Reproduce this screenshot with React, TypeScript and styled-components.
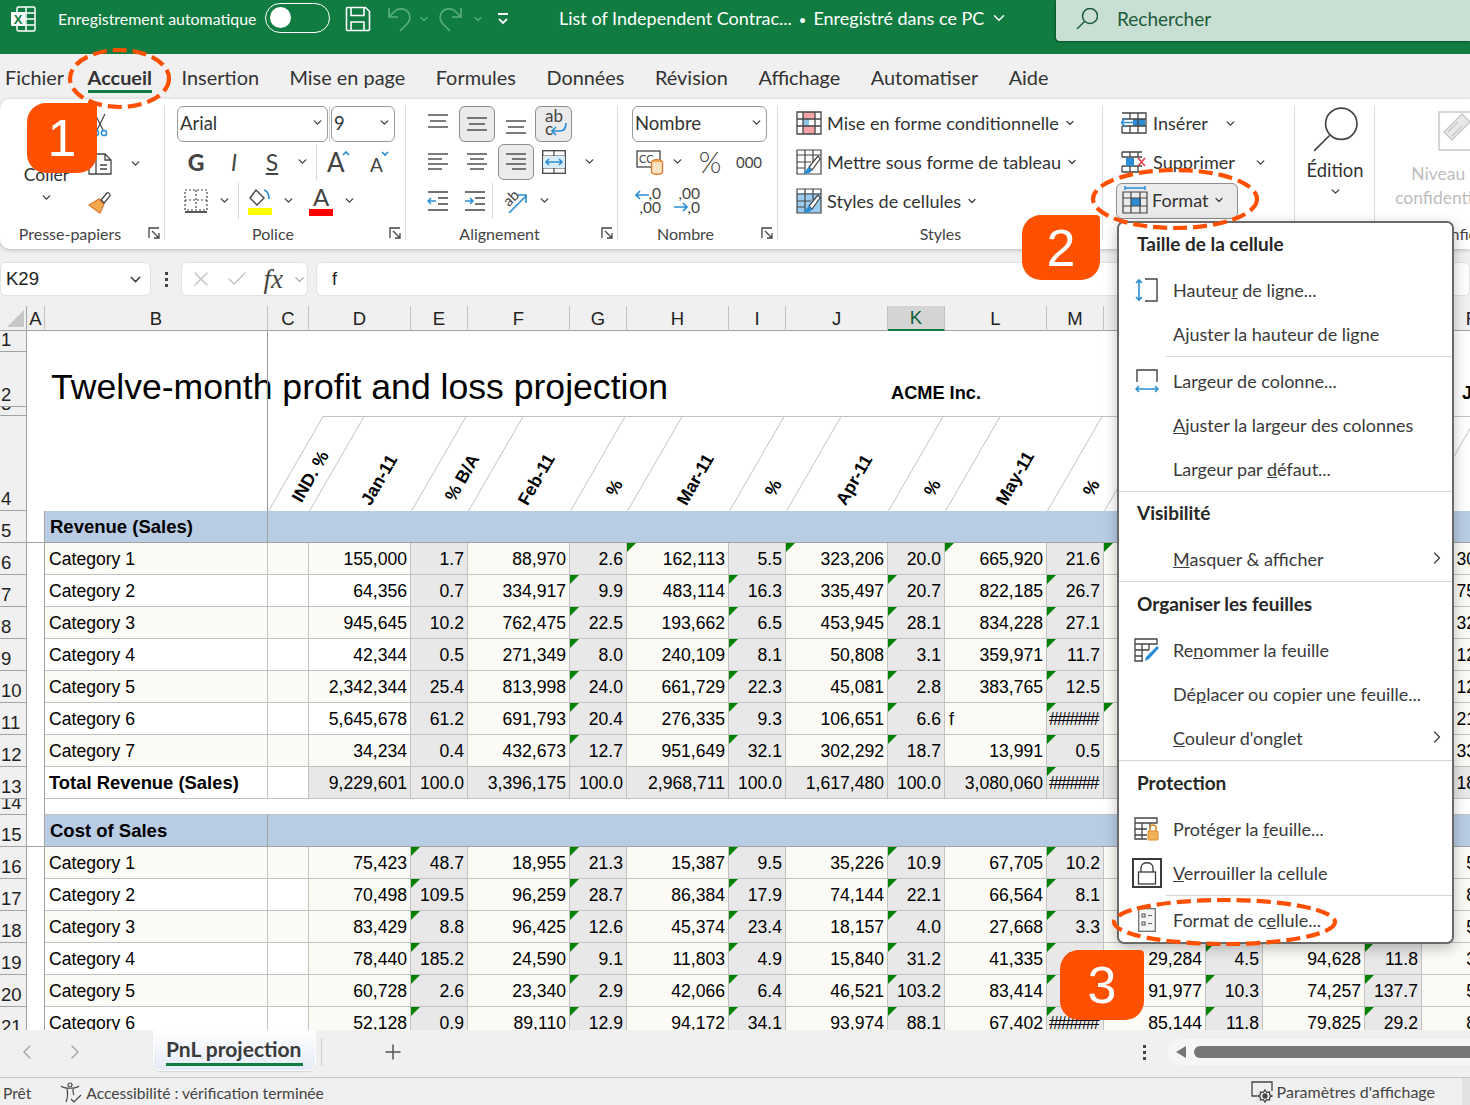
import React from 'react';
import styled, { createGlobalStyle, css } from 'styled-components';
import { Check, ChevronDown, ChevronLeft, ChevronRight, Plus, X } from 'lucide-react';

const UI_FONT = '"Lato", "Noto Sans", sans-serif';
const SHEET_FONT = '"Liberation Sans", Arial, sans-serif';
const GREEN = '#107c41';
const ORANGE = '#ff5000';
const GRID = '#c2c2c2';
const HEAD_LINE = '#a3a3a3';

const GlobalStyle = createGlobalStyle`
  html, body {
    margin: 0;
    background: #f0f0f0;
    overflow: hidden;
  }
  * { box-sizing: border-box; }
`;

const Page = styled.div`
  position: relative;
  width: 1470px;
  height: 1105px;
  overflow: hidden;
  display: flex;
  flex-direction: column;
  background: #f0f0f0;
  font-family: ${UI_FONT};
  color: #333;
`;

/* ---------- title bar ---------- */

const TitleBar = styled.header`
  height: 54px;
  flex: none;
  display: flex;
  align-items: flex-start;
  background: ${GREEN};
  color: #fff;
`;

const LogoSlot = styled.div`
  width: 58px;
  height: 38px;
  padding-left: 10px;
  display: flex;
  align-items: center;
`;

const AutoSave = styled.span`
  width: 207px;
  line-height: 37px;
  font-size: 15.9px;
  white-space: nowrap;
`;

const Toggle = styled.div`
  width: 65px;
  height: 30px;
  margin-top: 3px;
  border: 1.5px solid #fff;
  border-radius: 15px;
  padding: 3px 4px;
  &::before {
    content: '';
    display: block;
    width: 21px;
    height: 21px;
    border-radius: 50%;
    background: #fff;
  }
`;

const QuickSlot = styled.div<{ $w: number }>`
  width: ${p => p.$w}px;
  height: 38px;
  display: flex;
  align-items: center;
  justify-content: center;
  flex: none;
`;

const DocTitle = styled.div`
  margin-left: 43px;
  width: 497px;
  height: 38px;
  display: flex;
  align-items: center;
  gap: 6px;
  padding-bottom: 2px;
  font-size: 18px;
  white-space: pre;
`;

const DocDot = styled.span`
  margin: 0 7px;
  font-size: 13px;
`;

const SearchBox = styled.div`
  width: 414px;
  height: 41px;
  display: flex;
  align-items: center;
  gap: 19px;
  padding: 0 0 4px 20px;
  background: #c9dfd3;
  border-bottom-left-radius: 4px;
  box-shadow: -1px 1px 2px rgba(0, 0, 0, 0.35);
  color: #1d5a3a;
  font-size: 19px;
`;

/* ---------- tabs ---------- */

const TabStrip = styled.nav`
  height: 45px;
  flex: none;
  display: flex;
  gap: 30.5px;
  padding: 8px 0 0 5px;
  font-size: 19.9px;
`;

const TabItem = styled.span<{ $active?: boolean }>`
  position: relative;
  height: 30px;
  line-height: 30px;
  white-space: nowrap;
  ${p => p.$active && css`
    font-weight: 700;
    margin: 0 -1px 0 -7px;
    &::after {
      content: '';
      position: absolute;
      left: 0;
      right: 0;
      bottom: -1px;
      height: 3px;
      background: ${GREEN};
    }
  `}
`;

/* ---------- ribbon ---------- */

const Ribbon = styled.section`
  height: 150px;
  flex: none;
  display: flex;
  padding-top: 6px;
  background: #fff;
  border-radius: 10px 0 0 10px;
  box-shadow: 0 1px 4px rgba(0, 0, 0, 0.22);
`;

const Group = styled.div<{ $w: number }>`
  position: relative;
  width: ${p => p.$w}px;
  flex: none;
  display: flex;
  flex-direction: column;
  &::after {
    content: '';
    position: absolute;
    right: 0;
    top: 1px;
    width: 1px;
    height: 134px;
    background: #dcdcdc;
  }
`;

const GroupBody = styled.div<{ $pad?: number }>`
  height: 115px;
  padding-left: ${p => p.$pad ?? 0}px;
`;

const GroupFoot = styled.div`
  height: 26px;
  display: flex;
  align-items: center;
  font-size: 16px;
  color: #444;
`;

const GroupName = styled.span`
  flex: 1;
  text-align: center;
`;

const Launcher = styled.span`
  width: 25px;
  padding-left: 8px;
  display: flex;
`;

const ToolRow = styled.div<{ $h?: number }>`
  height: ${p => p.$h ?? 39}px;
  display: flex;
  align-items: center;
`;

const ToolBtn = styled.span<{ $w?: number; $on?: boolean }>`
  width: ${p => p.$w ?? 38}px;
  height: 36px;
  flex: none;
  display: flex;
  align-items: center;
  justify-content: center;
  color: #444;
  ${p => p.$on && css`
    background: #ebebeb;
    border: 1px solid #8d8d8d;
    border-radius: 6px;
  `}
`;

const Glyph = styled.span<{ $size?: number; $kind?: string }>`
  font-size: ${p => p.$size ?? 23}px;
  color: #444;
  ${p => p.$kind === 'bold' && 'font-weight: 900;'}
  ${p => p.$kind === 'italic' && 'font-style: italic;'}
  ${p => p.$kind === 'under' && 'text-decoration: underline;'}
  ${p => p.$kind === 'thin' && 'font-weight: 300;'}
`;

const VSep = styled.span<{ $w: number }>`
  width: ${p => p.$w}px;
  height: 36px;
  flex: none;
  display: flex;
  justify-content: center;
  &::before {
    content: '';
    width: 1px;
    background: #d6d6d6;
  }
`;

const SelectBox = styled.div<{ $w: number }>`
  width: ${p => p.$w}px;
  height: 36px;
  flex: none;
  display: flex;
  align-items: center;
  justify-content: space-between;
  padding: 0 3px 2px 2px;
  background: #fff;
  border: 1px solid #9c9c9c;
  border-radius: 6px;
  font-size: 18.5px;
  color: #333;
`;

const Carets = styled(ChevronDown)`
  flex: none;
  color: #444;
`;

const Caret = ({ size = 13 }: { size?: number }) => <Carets size={size} strokeWidth={2.6} />;

const ClipColumns = styled.div`
  display: flex;
`;

const PasteCol = styled.div`
  width: 88px;
  padding-left: 5px;
  display: flex;
  flex-direction: column;
  align-items: center;
  font-size: 17.5px;
  line-height: 24px;
`;

const PasteIcon = styled.div`
  height: 58px;
  padding-top: 6px;
`;

const PasteCaret = styled.span`
  display: flex;
  margin-top: 4px;
`;

const SmallCol = styled.div`
  display: flex;
  flex-direction: column;
`;

const SmallIcon = styled.span`
  width: 24px;
  display: flex;
  justify-content: center;
  margin-right: 17px;
`;

const StyleRow = styled.div`
  height: 39px;
  display: flex;
  align-items: center;
  gap: 5px;
  padding: 0 0 3px 18px;
  font-size: 18.1px;
  white-space: nowrap;
`;

const CellRow = styled.div<{ $w: number; $on?: boolean }>`
  width: ${p => p.$w}px;
  height: 39px;
  display: flex;
  align-items: center;
  gap: 6px;
  padding: 0 4px 3px 5px;
  font-size: 18.1px;
  ${p => p.$on && css`
    height: 36px;
    gap: 4px;
    padding-bottom: 2px;
    background: #ebebeb;
    border: 1px solid #8d8d8d;
    border-radius: 6px;
  `}
`;

const PushRight = styled.span<{ $r?: number }>`
  margin-left: auto;
  margin-right: ${p => p.$r ?? 0}px;
  display: flex;
`;

const EditCol = styled.div`
  display: flex;
  flex-direction: column;
  align-items: center;
  font-size: 18.4px;
  line-height: 24px;
  padding-top: 2px;
`;

const EditLabel = styled.span`
  margin: 5px 0 3px;
`;

const SecureCol = styled.div`
  display: flex;
  flex-direction: column;
  align-items: center;
  color: #bdbdbd;
  font-size: 17.5px;
  line-height: 24px;
  white-space: nowrap;
  padding-top: 3px;
`;

const SecureIcon = styled.span`
  display: flex;
  margin: 0 0 8px 10px;
`;

const SecureFoot = styled(GroupFoot)`
  padding-left: 56px;
  white-space: nowrap;
`;

/* ---------- formula bar ---------- */

const FormulaRow = styled.div`
  height: 47px;
  flex: none;
  display: flex;
  padding-top: 13px;
`;

const BarBox = styled.div<{ $w?: number }>`
  height: 34px;
  ${p => (p.$w ? `width: ${p.$w}px; flex: none;` : 'flex: 1;')}
  display: flex;
  align-items: center;
  background: #fff;
  border: 1px solid #e2e2e2;
  border-radius: 6px;
`;

const NameText = styled.span`
  flex: 1;
  padding-left: 5px;
  font: 18.5px ${SHEET_FONT};
  color: #222;
`;

const FxSlot = styled.span<{ $w: number }>`
  width: ${p => p.$w}px;
  display: flex;
  justify-content: center;
  color: #c4c4c4;
`;

const FxText = styled.span`
  font: italic 27px "Liberation Serif", serif;
  line-height: 30px;
  color: #444;
`;

const DotsSlot = styled.span<{ $w: number }>`
  width: ${p => p.$w}px;
  flex: none;
  display: flex;
  flex-direction: column;
  align-items: center;
  justify-content: center;
  gap: 3px;
  i {
    width: 3px;
    height: 3px;
    background: #444;
  }
`;

const FormulaValue = styled.span`
  padding-left: 15px;
  font: 18px ${SHEET_FONT};
  color: #222;
`;

/* ---------- sheet ---------- */

const SheetArea = styled.div`
  position: relative;
  height: 734px;
  flex: none;
  overflow: hidden;
  background: #f0f0f0;
`;

const SheetGrid = styled.div`
  display: grid;
  grid-template-columns: 27px 18px 223px 41px repeat(7, 102px 57px) 102px;
  grid-template-rows: 25px 21px 55px 9px 95px 32px repeat(8, 32px) 16px repeat(7, 32px);
  width: 1524px;
  margin-top: 10px;
  font: 17.6px ${SHEET_FONT};
  color: #000;
`;

const Corner = styled.div`
  background: #f0f0f0;
  border-right: 1px solid ${HEAD_LINE};
  border-bottom: 1px solid ${HEAD_LINE};
  &::before {
    content: '';
    display: block;
    margin: 4px 0 0 7px;
    width: 17px;
    height: 17px;
    background: #c6c6c6;
    clip-path: polygon(100% 0, 100% 100%, 0 100%);
  }
`;

const ColHead = styled.div<{ $active?: boolean }>`
  display: flex;
  align-items: flex-end;
  justify-content: center;
  overflow: hidden;
  line-height: 23px;
  font-size: 18.5px;
  color: #222;
  background: #f0f0f0;
  border-right: 1px solid ${GRID};
  border-bottom: 1px solid ${HEAD_LINE};
  ${p => p.$active && css`
    background: #d4d4d4;
    color: #0d5f35;
    border-bottom: 2px solid ${GREEN};
  `}
`;

const RowHead = styled.div`
  display: flex;
  align-items: flex-end;
  overflow: hidden;
  padding-left: 1px;
  line-height: 22px;
  font-size: 18.5px;
  color: #222;
  background: #f0f0f0;
  border-right: 1px solid ${HEAD_LINE};
  border-bottom: 1px solid ${HEAD_LINE};
`;

const Blank = styled.div<{ $from: number; $to?: number; $line?: boolean }>`
  grid-column: ${p => p.$from} / ${p => p.$to ?? -1};
  background: #fff;
  ${p => p.$line && `border-bottom: 1px solid ${GRID};`}
`;

const GutterCell = styled.div<{ $line?: boolean }>`
  background: #fff;
  border-right: 1px solid ${HEAD_LINE};
  ${p => p.$line && `border-bottom: 1px solid ${HEAD_LINE};`}
`;

const TitleCell = styled.div`
  grid-column: 2 / -1;
  display: grid;
  grid-template-columns: 864px 571px auto;
  align-items: end;
  background: #fff;
`;

const SheetTitle = styled.span`
  padding-left: 24px;
  font-size: 35.6px;
  line-height: 40px;
  white-space: nowrap;
`;

const CompanyName = styled.span`
  font-size: 18.2px;
  font-weight: 700;
  line-height: 28px;
  white-space: nowrap;
`;

const DiagCell = styled.div`
  position: relative;
  background: #fff;
  &::before {
    content: '';
    position: absolute;
    z-index: 1;
    inset: 0 -1px 0 0;
    border-left: 1px solid ${GRID};
    border-top: 1px solid ${GRID};
    transform: skewX(-30deg);
    transform-origin: left bottom;
  }
`;

const DiagLabel = styled.span<{ $x: number; $b: number }>`
  position: absolute;
  z-index: 2;
  left: ${p => p.$x}px;
  bottom: ${p => p.$b}px;
  transform: rotate(-60deg);
  transform-origin: left bottom;
  font-size: 17.6px;
  font-weight: 700;
  line-height: 18px;
  white-space: nowrap;
`;

const FreezeLine = styled.div`
  position: absolute;
  left: 267px;
  top: 35px;
  width: 1px;
  height: 180px;
  background: #9c9c9c;
  z-index: 3;
`;

const BandLabel = styled.div`
  display: flex;
  align-items: center;
  padding: 0 0 0 5px;
  font-size: 18.5px;
  font-weight: 700;
  background: #b8cce4;
  border-right: 1px solid ${HEAD_LINE};
  border-bottom: 1px solid ${HEAD_LINE};
`;

const BandFill = styled.div`
  grid-column: 4 / -1;
  background: #b8cce4;
  border-bottom: 1px solid ${HEAD_LINE};
`;

type Tone = 'cream' | 'white' | 'grey';

const toneColor: Record<Tone, string> = { cream: '#fbfaf5', white: '#fff', grey: '#e8e8e8' };

const Cell = styled.div<{ $tone: Tone; $flag?: boolean; $label?: boolean; $bold?: boolean; $hash?: boolean }>`
  position: relative;
  display: flex;
  align-items: center;
  justify-content: ${p => (p.$label ? 'flex-start' : 'flex-end')};
  padding: ${p => (p.$label ? '2px 0 0 4px' : '2px 3px 0 0')};
  overflow: hidden;
  white-space: nowrap;
  background: ${p => toneColor[p.$tone]};
  border-right: 1px solid ${GRID};
  border-bottom: 1px solid ${GRID};
  ${p => p.$bold && 'font-weight: 700; font-size: 18.4px; padding-top: 0;'}
  ${p => p.$hash && 'letter-spacing: -1.6px; padding-right: 5px;'}
  ${p => p.$flag && css`
    &::before {
      content: '';
      position: absolute;
      top: 0;
      left: 0;
      width: 9px;
      height: 9px;
      background: #008000;
      clip-path: polygon(0 0, 100% 0, 0 100%);
    }
  `}
`;

/* ---------- sheet tabs and status ---------- */

const SheetTabs = styled.div`
  height: 47px;
  flex: none;
  display: flex;
  align-items: flex-start;
  background: #f0f0f0;
`;

const TabNav = styled.div`
  width: 153px;
  height: 44px;
  flex: none;
  display: flex;
  align-items: center;
  gap: 24px;
  padding-left: 15px;
  color: #a8a8a8;
`;

const ActiveSheet = styled.div`
  width: 163px;
  height: 41px;
  flex: none;
  padding: 5px 12px 0;
  background: linear-gradient(#fff, #e4ebf6);
  border: 1px solid #fff;
  border-top: 0;
  border-radius: 0 0 8px 8px;
  box-shadow: 0 1px 1px rgba(0, 0, 0, 0.12);
  font-size: 21px;
  font-weight: 700;
  white-space: nowrap;
`;

const SheetName = styled.span`
  display: block;
  line-height: 28px;
  border-bottom: 3px solid ${GREEN};
  color: #3a3a3a;
`;

const AddSheet = styled.div`
  width: 142px;
  height: 44px;
  flex: none;
  display: flex;
  align-items: center;
  color: #555;
  &::before {
    content: '';
    width: 1px;
    height: 28px;
    margin: 0 59px 0 5px;
    background: #cfcfcf;
  }
`;

const TabDots = styled(DotsSlot)`
  height: 44px;
  margin-left: auto;
`;

const ScrollTrack = styled.div`
  width: 302px;
  height: 26px;
  flex: none;
  margin: 9px 0 0 14px;
  display: flex;
  align-items: center;
  gap: 8px;
  padding-left: 8px;
  background: #f6f6f6;
  border-radius: 13px 0 0 13px;
`;

const ScrollArrow = styled.span`
  width: 10px;
  height: 12px;
  background: #767676;
  clip-path: polygon(100% 0, 100% 100%, 0 50%);
`;

const ScrollThumb = styled.span`
  flex: 1;
  height: 12px;
  background: #767676;
  border-radius: 6px 0 0 6px;
`;

const StatusBar = styled.footer`
  height: 28px;
  flex: none;
  display: flex;
  align-items: center;
  padding-left: 3px;
  border-top: 1px solid #c6c6c6;
  font-size: 15.6px;
  color: #444;
`;

const StatusItem = styled.span<{ $gap?: number }>`
  display: flex;
  align-items: center;
  gap: 4px;
  padding-top: 3px;
  margin-left: ${p => p.$gap ?? 0}px;
  white-space: nowrap;
`;

const StatusRight = styled(StatusItem)`
  margin-left: auto;
  height: 100%;
  padding-top: 0;
  font-size: 16px;
  &::after {
    content: '';
    width: 8px;
    height: 100%;
    margin-left: 23px;
    background: #e2e2e2;
  }
`;

/* ---------- format menu ---------- */

const Menu = styled.div`
  position: absolute;
  left: 1117px;
  top: 221px;
  width: 337px;
  height: 723px;
  z-index: 5;
  background: #fff;
  border: 2px solid #6a6a6a;
  border-radius: 7px;
  box-shadow: 0 4px 14px rgba(0, 0, 0, 0.25);
`;

const MenuHeading = styled.div`
  height: 45px;
  line-height: 42px;
  padding-left: 18px;
  font-size: 19px;
  font-weight: 700;
  color: #262626;
`;

const MenuRow = styled.div`
  height: 44px;
  display: flex;
  align-items: center;
  font-size: 18px;
  color: #3a3a3a;
  white-space: nowrap;
`;

const MenuIcon = styled.span`
  width: 54px;
  flex: none;
  display: flex;
  justify-content: center;
  padding-left: 2px;
`;

const MenuArrow = styled(PushRight)`
  margin-right: 5px;
  padding-bottom: 3px;
  color: #444;
`;

const MenuSep = styled.div<{ $h: number; $inset?: boolean }>`
  height: ${p => p.$h}px;
  margin-left: ${p => (p.$inset ? 47 : 0)}px;
  border-top: 1px solid #d4d4d4;
`;

/* ---------- call-outs ---------- */

const Ring = styled.svg<{ $x: number; $y: number }>`
  position: absolute;
  left: ${p => p.$x}px;
  top: ${p => p.$y}px;
  z-index: 6;
  overflow: visible;
`;

const Badge = styled.div<{ $x: number; $y: number; $w: number; $h: number }>`
  position: absolute;
  left: ${p => p.$x}px;
  top: ${p => p.$y}px;
  width: ${p => p.$w}px;
  height: ${p => p.$h}px;
  z-index: 7;
  display: flex;
  align-items: center;
  justify-content: center;
  background: ${ORANGE};
  border-radius: 19px 4px 19px 19px;
  color: #fff;
  font: 52px ${SHEET_FONT};
`;

/* ---------- drawn icons ---------- */

const BLUE = '#2a8dd4';
const INK = '#444';

const Excel = () => (
  <svg width="26" height="26" viewBox="0 0 26 26" fill="none" stroke="#fff" strokeWidth="1.5">
    <rect x="7" y="1" width="18" height="24" rx="1.5" />
    <path d="M7 7h18M7 13h18M7 19h18M16 1v24" />
    <rect x="1" y="6" width="14" height="14" rx="1" fill="#fff" stroke="none" />
    <text x="8" y="18" textAnchor="middle" fontFamily="Liberation Sans" fontWeight="700" fontSize="13" fill={GREEN} stroke="none">X</text>
  </svg>
);

const Save = () => (
  <svg width="26" height="26" viewBox="0 0 26 26" fill="none" stroke="#fff" strokeWidth="1.6">
    <path d="M1.5 2.5a1 1 0 0 1 1-1h18l4 4v18a1 1 0 0 1-1 1h-21a1 1 0 0 1-1-1z" />
    <path d="M6 1.5v8h13v-8M6 24.5v-8.5h13v8.5" />
  </svg>
);

const Undo = ({ flip }: { flip?: boolean }) => (
  <svg width="24" height="26" viewBox="0 0 24 26" fill="none" stroke="#58ac7f" strokeWidth="1.7" style={flip ? { transform: 'scaleX(-1)' } : undefined}>
    <path d="M2 2v9h9M2 11l6-6c3-3 10-3 13 1s2 9-1 12l-7 7" />
  </svg>
);

const QatMore = () => (
  <svg width="14" height="14" viewBox="0 0 14 14" fill="none" stroke="#fff" strokeWidth="1.8">
    <path d="M2 2h10M3 7l4 4 4-4" />
  </svg>
);

const Magnifier = ({ size = 22, stroke = '#d7e8de', dark }: { size?: number; stroke?: string; dark?: boolean }) => (
  <svg width={size} height={size} viewBox="0 0 44 44" fill="none" stroke={dark ? '#1d5a3a' : stroke} strokeWidth={size > 30 ? 1.6 : 3}>
    <circle cx="28" cy="16" r="15" />
    <path d="M17 27L2 42" />
  </svg>
);

const Launch = () => (
  <svg width="12" height="12" viewBox="0 0 12 12" fill="none" stroke={INK} strokeWidth="1.3">
    <path d="M1 11V1h10M4 4l7 7M11 6v5H6" />
  </svg>
);

const Lines = ({ rows, w = 22, h = 22 }: { rows: number[][]; w?: number; h?: number }) => (
  <svg width={w} height={h} viewBox={`0 0 ${w} ${h}`} stroke={INK} strokeWidth="1.4">
    {rows.map(([x1, y, x2]) => <path key={`${x1}-${y}`} d={`M${x1} ${y}H${x2}`} />)}
  </svg>
);

const WrapText = () => (
  <svg width="28" height="30" viewBox="0 0 28 30" fill="none">
    <text x="5" y="13" fontFamily="Lato" fontSize="17" fill={INK}>ab</text>
    <text x="5" y="26" fontFamily="Lato" fontSize="17" fill={INK}>c</text>
    <path d="M26 14c0 6-3 8-6 8h-7M16 18l-4 4 4 4" stroke={BLUE} strokeWidth="1.7" />
  </svg>
);

const Merge = () => (
  <svg width="24" height="24" viewBox="0 0 24 24" fill="none">
    <rect x=".7" y=".7" width="22.6" height="22.6" stroke={INK} strokeWidth="1.3" />
    <path d="M1 6h22M1 18h22M12 1v5M12 18v5" stroke={INK} strokeWidth="1.2" />
    <rect x="1" y="6" width="22" height="12" fill="#d9ecfa" />
    <path d="M4 12h16M7 9l-3 3 3 3M17 9l3 3-3 3" stroke={BLUE} strokeWidth="1.5" />
  </svg>
);

const Indent = ({ dir }: { dir: 'in' | 'out' }) => (
  <svg width="22" height="22" viewBox="0 0 22 22" fill="none">
    <path d="M1 2h20M11 8h10M11 14h10M1 20h20" stroke={INK} strokeWidth="1.4" />
    <path d={dir === 'out' ? 'M9 11H1M4 8l-3 3 3 3' : 'M1 11h8M6 8l3 3-3 3'} stroke={BLUE} strokeWidth="1.5" />
  </svg>
);

const Orientation = () => (
  <svg width="26" height="26" viewBox="0 0 26 26" fill="none">
    <text x="3" y="16" fontFamily="Lato" fontSize="15" fill={INK} transform="rotate(-45 9 13)">ab</text>
    <path d="M7 25L24 8M16 7h8v8" stroke={BLUE} strokeWidth="1.6" />
  </svg>
);

const Scissors = () => (
  <svg width="16" height="24" viewBox="0 0 16 24" fill="none">
    <path d="M3 1l8 16M13 1L5 17" stroke={INK} strokeWidth="1.2" />
    <circle cx="4" cy="20" r="2.6" stroke={BLUE} strokeWidth="1.5" />
    <circle cx="12" cy="20" r="2.6" stroke={BLUE} strokeWidth="1.5" />
  </svg>
);

const CopyDoc = () => (
  <svg width="24" height="22" viewBox="0 0 24 22" fill="none" stroke={INK} strokeWidth="1.3">
    <path d="M8 1h9l6 6v14H8zM17 1v6h6M1 8v13h7M12 12h7M12 16h7" />
  </svg>
);

const Brush = () => (
  <svg width="24" height="24" viewBox="0 0 24 24" fill="none">
    <path d="M11 8l5 5-4 9-11-8z" fill="#f6a94c" stroke="#d9762b" strokeWidth="1.2" />
    <path d="M13 9l6-7c1-1 4 1 3 3l-6 7z" fill="#fff" stroke={INK} strokeWidth="1.3" />
  </svg>
);

const Clipboard = () => (
  <svg width="34" height="42" viewBox="0 0 34 42" fill="none" stroke={INK} strokeWidth="1.4">
    <rect x="2" y="6" width="30" height="34" rx="2" fill="#f4d9a8" />
    <rect x="10" y="2" width="14" height="8" fill="#fff" />
  </svg>
);

const Borders = () => (
  <svg width="24" height="24" viewBox="0 0 24 24" fill="none" stroke={INK} strokeWidth="1.2">
    <path d="M1 1h22v20H1zM12 1v20M1 11h22" strokeDasharray="2 2" />
    <path d="M1 23h22" strokeWidth="1.8" />
  </svg>
);

const FillColor = () => (
  <svg width="26" height="28" viewBox="0 0 26 28" fill="none">
    <path d="M9 3l8 8-7 7-7-7z" stroke={INK} strokeWidth="1.4" />
    <path d="M17 3c4 1 5 5 5 9" stroke={BLUE} strokeWidth="1.8" />
    <rect x="1" y="21" width="24" height="7" fill="#ffff00" />
  </svg>
);

const FontColor = () => (
  <svg width="26" height="30" viewBox="0 0 26 30" fill="none">
    <text x="13" y="20" textAnchor="middle" fontFamily="Lato" fontSize="24" fill={INK}>A</text>
    <rect x="1" y="23" width="24" height="7" fill="#ff0000" />
  </svg>
);

const GrowA = ({ up }: { up?: boolean }) => (
  <svg width="32" height="28" viewBox="0 0 32 28" fill="none">
    <text x={up ? 5 : 8} y="24" fontFamily="Lato" fontSize={up ? 26 : 19} fill={INK}>A</text>
    <path d={up ? 'M21 7l3-3 3 3' : 'M20 4l3 3 3-3'} stroke={BLUE} strokeWidth="1.7" />
  </svg>
);

const Accounting = () => (
  <svg width="28" height="26" viewBox="0 0 28 26" fill="none">
    <rect x="1" y="2" width="23" height="16" stroke={INK} strokeWidth="1.3" />
    <text x="3" y="14" fontFamily="Lato" fontSize="11" fill={INK}>CC</text>
    <ellipse cx="21" cy="13" rx="5.5" ry="2.5" fill="#f6a94c" stroke="#d9762b" />
    <path d="M15.5 13v10c0 3 11 3 11 0V13" fill="#fbe3c4" stroke="#d9762b" strokeWidth="1.3" />
  </svg>
);

const Decimals = ({ more }: { more?: boolean }) => (
  <svg width="28" height="28" viewBox="0 0 28 28" fill="none">
    <text x="27" y="12" textAnchor="end" fontFamily="Lato" fontSize="15.5" fill={INK}>{more ? ',00' : ',0'}</text>
    <text x="27" y="26" textAnchor="end" fontFamily="Lato" fontSize="15.5" fill={INK}>{more ? ',0' : ',00'}</text>
    <path d={more ? 'M1 20h13M10 16l4 4-4 4' : 'M15 8H2M6 4L2 8l4 4'} stroke={BLUE} strokeWidth="1.7" />
  </svg>
);

const CondFormat = () => (
  <svg width="26" height="24" viewBox="0 0 26 24" fill="none">
    <rect x="7" y="1" width="12" height="7" fill="#f4a4a8" />
    <rect x="7" y="15" width="12" height="8" fill="#f4a4a8" />
    <rect x="7" y="8" width="6" height="7" fill="#8dc3ea" />
    <path d="M1 1h24v22H1zM7 1v22M19 1v22M1 8h24M1 15h24" stroke={INK} strokeWidth="1.3" />
  </svg>
);

const TableBrush = ({ filled }: { filled?: boolean }) => (
  <svg width="26" height="26" viewBox="0 0 26 26" fill="none">
    {filled && <rect x="1" y="5" width="24" height="20" fill="#9ccdf0" />}
    <path d="M1 1h24v24H1zM1 6h24M9 1v24M17 1v12M1 13h14M1 19h8" stroke={INK} strokeWidth="1.2" />
    <path d="M22 7L13 18l3 3 8-11z" fill="#fff" stroke={INK} strokeWidth="1.2" />
    <path d="M13 18c-2 1-3 4-6 7 4 0 8-1 9-4z" fill={BLUE} />
  </svg>
);

const InsertCells = () => (
  <svg width="26" height="22" viewBox="0 0 26 22" fill="none">
    <rect x="12" y="7" width="12" height="7" fill={BLUE} />
    <path d="M1 1h24v20H1M1 14v7M9 14v7M17 1v20M9 1v6M1 7h24M1 14h24" stroke={INK} strokeWidth="1.3" />
    <path d="M13 10.5H1M5 6l-5 4.5L5 15" stroke={BLUE} strokeWidth="1.6" />
  </svg>
);

const DeleteCells = () => (
  <svg width="26" height="22" viewBox="0 0 26 22" fill="none">
    <path d="M1 1h20M1 21h20M1 1v5M1 15v6M9 1v5M9 15v6M17 1v5M17 15v6M1 6h20M1 15h20" stroke={INK} strokeWidth="1.3" />
    <rect x="5" y="7" width="8" height="8" fill={BLUE} />
    <path d="M17 7l7 8M24 7l-7 8" stroke="#e53a47" strokeWidth="1.6" />
  </svg>
);

const FormatCells = () => (
  <svg width="26" height="28" viewBox="0 0 26 28" fill="none">
    <path d="M3 2h20M3 0v4M23 0v4" stroke={BLUE} strokeWidth="1.4" />
    <rect x="9" y="12" width="10" height="8" fill={BLUE} />
    <path d="M1 6h24v21H1zM9 6v21M18 6v21M1 12h24M1 20h24" stroke={INK} strokeWidth="1.2" />
  </svg>
);

const Sensitivity = () => (
  <svg width="34" height="46" viewBox="0 0 34 46" fill="none" stroke="#c9c9c9" strokeWidth="1.5">
    <path d="M1 4h32v38H1z" />
    <path d="M6 24L24 6l8 8-18 18z" fill="#e8e8e8" />
    <path d="M10 24l10-10M14 28l10-10" />
  </svg>
);

const RowHeightIco = () => (
  <svg width="24" height="24" viewBox="0 0 24 24" fill="none">
    <path d="M10 1h12v22H10" stroke={INK} strokeWidth="1.4" />
    <path d="M4 2v20M1 5l3-3 3 3M1 19l3 3 3-3" stroke={BLUE} strokeWidth="1.6" />
  </svg>
);

const ColWidthIco = () => (
  <svg width="24" height="24" viewBox="0 0 24 24" fill="none">
    <path d="M2 13V1h20v12" stroke={INK} strokeWidth="1.4" />
    <path d="M1 20h22M4 17l-3 3 3 3M20 17l3 3-3 3" stroke={BLUE} strokeWidth="1.5" />
  </svg>
);

const RenameIco = () => (
  <svg width="26" height="24" viewBox="0 0 26 24" fill="none">
    <path d="M1 1h22v5H1zM1 6v17h8M1 12h14M1 18h8M8 6v17M15 6v6" stroke={INK} strokeWidth="1.3" />
    <path d="M23 8l2 2-10 11-4 2 1-4z" fill={BLUE} />
  </svg>
);

const ProtectIco = () => (
  <svg width="26" height="24" viewBox="0 0 26 24" fill="none">
    <path d="M1 1h22v5H1zM1 6v16h12M1 12h12M1 18h12M8 6v16M16 6v6" stroke={INK} strokeWidth="1.3" />
    <path d="M16 14v-3c0-4 6-4 6 0v3" stroke="#d98a25" strokeWidth="1.5" />
    <rect x="14" y="14" width="10" height="9" rx="1" fill="#f2b25c" stroke="#d98a25" />
  </svg>
);

const LockBox = () => (
  <svg width="30" height="30" viewBox="0 0 30 30" fill="none" stroke="#3a3a3a">
    <rect x="1" y="1" width="28" height="28" strokeWidth="2" />
    <path d="M9 14V10c0-7 12-7 12 0v4" strokeWidth="1.3" />
    <rect x="6.5" y="14" width="17" height="12" strokeWidth="1.3" />
  </svg>
);

const FormatDialog = () => (
  <svg width="18" height="24" viewBox="0 0 18 24" fill="none" stroke="#666" strokeWidth="1.2">
    <rect x=".7" y=".7" width="16.6" height="22.6" fill="#f5f5f5" />
    <rect x="4" y="6" width="3" height="3" />
    <rect x="4" y="14" width="3" height="3" />
    <path d="M10 7.5h4M10 15.5h4" />
  </svg>
);

const AccessIco = () => (
  <svg width="22" height="22" viewBox="0 0 22 22" fill="none" stroke={INK} strokeWidth="1.2">
    <circle cx="10" cy="3" r="2" />
    <path d="M1 4c3 3 15 3 18 0M7 7c1 4 1 8-1 13M13 7c0 3 0 5 1 6" />
    <path d="M11 17l3 3 7-7" />
  </svg>
);

const DisplayIco = () => (
  <svg width="22" height="22" viewBox="0 0 22 22" fill="none" stroke={INK} strokeWidth="1.3">
    <path d="M6 15H1V1h20v9" />
    <circle cx="14" cy="15" r="2" fill={INK} />
    <path d="M14 9l1.6 2.4 2.9-.4.2 2.9L21 15l-2.3 1.1-.2 2.9-2.9-.4L14 21l-1.6-2.4-2.9.4-.2-2.9L7 15l2.3-1.1.2-2.9 2.9.4z" />
  </svg>
);

const DashedEllipse = ({ x, y, w, h }: { x: number; y: number; w: number; h: number }) => (
  <Ring $x={x} $y={y} width={w} height={h} viewBox={`0 0 ${w} ${h}`} fill="none">
    <ellipse cx={w / 2} cy={h / 2} rx={w / 2 - 2} ry={h / 2 - 2} stroke={ORANGE} strokeWidth="4.2" strokeDasharray="14 6" />
  </Ring>
);

/* ---------- sheet data ---------- */

const LETTERS = 'ABCDEFGHIJKLMNOPQR'.split('');

const DIAGONALS: [string, number, number][] = [
  ['IND. %', 36, 6], ['Jan-11', 64, 3], ['% B/A', 46, 7], ['Feb-11', 62, 3], ['%', 48, 12], ['Mar-11', 62, 3],
  ['%', 48, 12], ['Apr-11', 62, 3], ['%', 48, 12], ['May-11', 63, 3], ['%', 48, 12], ['Jun-11', 62, 3],
  ['%', 48, 12], ['Jul-11', 62, 3], ['%', 48, 12], ['Aug-11', 62, 3],
];

const REVENUE: [string, string[], number[]][] = [
  ['Category 1', ['155,000', '1.7', '88,970', '2.6', '162,113', '5.5', '323,206', '20.0', '665,920', '21.6', '218,440', '5.1', '412,006', '9.4', '303,128'], [4, 6, 8, 10]],
  ['Category 2', ['64,356', '0.7', '334,917', '9.9', '483,114', '16.3', '335,497', '20.7', '822,185', '26.7', '402,118', '9.4', '120,553', '2.8', '751,902'], [3, 5, 7, 9]],
  ['Category 3', ['945,645', '10.2', '762,475', '22.5', '193,662', '6.5', '453,945', '28.1', '834,228', '27.1', '730,221', '17.1', '504,917', '11.7', '322,840'], [3, 5, 7, 9]],
  ['Category 4', ['42,344', '0.5', '271,349', '8.0', '240,109', '8.1', '50,808', '3.1', '359,971', '11.7', '118,302', '2.8', '633,150', '14.7', '125,773'], [3, 5, 7, 9]],
  ['Category 5', ['2,342,344', '25.4', '813,998', '24.0', '661,729', '22.3', '45,081', '2.8', '383,765', '12.5', '901,447', '21.1', '266,318', '6.2', '127,605'], [3, 5, 7, 9]],
  ['Category 6', ['5,645,678', '61.2', '691,793', '20.4', '276,335', '9.3', '106,651', '6.6', 'f', '######', '540,662', '12.6', '815,029', '18.9', '214,386'], [3, 5, 7, 9, 10]],
  ['Category 7', ['34,234', '0.4', '432,673', '12.7', '951,649', '32.1', '302,292', '18.7', '13,991', '0.5', '311,870', '7.3', '152,744', '3.5', '338,019'], [3, 5, 7, 9]],
];

const REV_TOTAL = ['9,229,601', '100.0', '3,396,175', '100.0', '2,968,711', '100.0', '1,617,480', '100.0', '3,080,060', '######', '4,280,300', '100.0', '4,310,600', '100.0', '182,400'];

const COSTS: [string, string[]][] = [
  ['Category 1', ['75,423', '48.7', '18,955', '21.3', '15,387', '9.5', '35,226', '10.9', '67,705', '10.2', '41,220', '6.3', '72,115', '9.6', '52,610']],
  ['Category 2', ['70,498', '109.5', '96,259', '28.7', '86,384', '17.9', '74,144', '22.1', '66,564', '8.1', '18,903', '7.1', '33,480', '4.2', '84,227']],
  ['Category 3', ['83,429', '8.8', '96,425', '12.6', '45,374', '23.4', '18,157', '4.0', '27,668', '3.3', '60,112', '9.9', '25,917', '5.1', '51,340']],
  ['Category 4', ['78,440', '185.2', '24,590', '9.1', '11,803', '4.9', '15,840', '31.2', '41,335', '10.1', '29,284', '4.5', '94,628', '11.8', '35,702']],
  ['Category 5', ['60,728', '2.6', '23,340', '2.9', '42,066', '6.4', '46,521', '103.2', '83,414', '5.6', '91,977', '10.3', '74,257', '137.7', '57,218']],
  ['Category 6', ['52,128', '0.9', '89,110', '12.9', '94,172', '34.1', '93,974', '88.1', '67,402', '######', '85,144', '11.8', '79,825', '29.2', '86,491']],
];

const isPct = (i: number) => i % 2 === 1;

const ValueCells = ({ values, flags, firstTone }: { values: string[]; flags: number[]; firstTone: Tone }) => (
  <>
    {values.map((v, i) => {
      const text = v === 'f';
      const tone: Tone = isPct(i) ? 'grey' : i === 0 ? firstTone : 'cream';
      return (
        <Cell key={i} $tone={tone} $flag={flags.includes(i)} $label={text} $hash={v === '######'}>
          {v}
        </Cell>
      );
    })}
  </>
);

const FLAG_ALL_COST = [1, 3, 5, 7, 9];
const FLAG_LOWER_COST = [1, 3, 5, 7, 9, 11, 13];

export default function App() {
  return (
    <Page>
      <GlobalStyle />

      <TitleBar>
        <LogoSlot><Excel /></LogoSlot>
        <AutoSave>Enregistrement automatique</AutoSave>
        <Toggle />
        <QuickSlot $w={56}><Save /></QuickSlot>
        <QuickSlot $w={26}><Undo /></QuickSlot>
        <QuickSlot $w={24}><ChevronDown size={12} color="#58ac7f" strokeWidth={2.5} /></QuickSlot>
        <QuickSlot $w={30}><Undo flip /></QuickSlot>
        <QuickSlot $w={24}><ChevronDown size={12} color="#58ac7f" strokeWidth={2.5} /></QuickSlot>
        <QuickSlot $w={26}><QatMore /></QuickSlot>
        <DocTitle>
          <span>List of Independent Contrac...<DocDot>•</DocDot>Enregistré dans ce PC</span>
          <ChevronDown size={18} strokeWidth={2} />
        </DocTitle>
        <SearchBox>
          <Magnifier dark />
          Rechercher
        </SearchBox>
      </TitleBar>

      <TabStrip>
        <TabItem>Fichier</TabItem>
        <TabItem $active>Accueil</TabItem>
        <TabItem>Insertion</TabItem>
        <TabItem>Mise en page</TabItem>
        <TabItem>Formules</TabItem>
        <TabItem>Données</TabItem>
        <TabItem>Révision</TabItem>
        <TabItem>Affichage</TabItem>
        <TabItem>Automatiser</TabItem>
        <TabItem>Aide</TabItem>
      </TabStrip>

      <Ribbon>
        <Group $w={165}>
          <GroupBody>
            <ClipColumns>
              <PasteCol>
                <PasteIcon><Clipboard /></PasteIcon>
                Coller
                <PasteCaret><Caret /></PasteCaret>
              </PasteCol>
              <SmallCol>
                <ToolRow><SmallIcon><Scissors /></SmallIcon></ToolRow>
                <ToolRow><SmallIcon><CopyDoc /></SmallIcon><Caret /></ToolRow>
                <ToolRow><SmallIcon><Brush /></SmallIcon></ToolRow>
              </SmallCol>
            </ClipColumns>
          </GroupBody>
          <GroupFoot><GroupName>Presse-papiers</GroupName><Launcher><Launch /></Launcher></GroupFoot>
        </Group>

        <Group $w={241}>
          <GroupBody $pad={12}>
            <ToolRow $h={37}>
              <SelectBox $w={151}>Arial<Caret /></SelectBox>
              <VSep $w={3} />
              <SelectBox $w={64}>9<Caret /></SelectBox>
            </ToolRow>
            <ToolRow>
              <ToolBtn><Glyph $kind="bold">G</Glyph></ToolBtn>
              <ToolBtn><Glyph $kind="italic">I</Glyph></ToolBtn>
              <ToolBtn><Glyph $kind="under">S</Glyph></ToolBtn>
              <ToolBtn $w={22}><Caret /></ToolBtn>
              <VSep $w={7} />
              <ToolBtn $w={36}><GrowA up /></ToolBtn>
              <ToolBtn $w={44}><GrowA /></ToolBtn>
            </ToolRow>
            <ToolRow>
              <ToolBtn><Borders /></ToolBtn>
              <ToolBtn $w={18}><Caret /></ToolBtn>
              <VSep $w={10} />
              <ToolBtn $w={34}><FillColor /></ToolBtn>
              <ToolBtn $w={22}><Caret /></ToolBtn>
              <ToolBtn $w={44}><FontColor /></ToolBtn>
              <ToolBtn $w={12}><Caret /></ToolBtn>
            </ToolRow>
          </GroupBody>
          <GroupFoot><GroupName>Police</GroupName><Launcher><Launch /></Launcher></GroupFoot>
        </Group>

        <Group $w={212}>
          <GroupBody $pad={12}>
            <ToolRow $h={37}>
              <ToolBtn $w={39}><Lines rows={[[1, 2, 21], [3, 8, 19], [1, 14, 21]]} /></ToolBtn>
              <ToolBtn $w={39}>
                <ToolBtn $w={36} $on><Lines rows={[[1, 5, 21], [3, 11, 19], [1, 17, 21]]} /></ToolBtn>
              </ToolBtn>
              <ToolBtn $w={39}><Lines rows={[[1, 8, 21], [3, 14, 19], [1, 20, 21]]} /></ToolBtn>
              <ToolBtn $w={37} $on><WrapText /></ToolBtn>
            </ToolRow>
            <ToolRow>
              <ToolBtn $w={39}><Lines rows={[[1, 3, 21], [1, 8, 15], [1, 13, 21], [1, 18, 15]]} /></ToolBtn>
              <ToolBtn $w={39}><Lines rows={[[1, 3, 21], [4, 8, 18], [1, 13, 21], [4, 18, 18]]} /></ToolBtn>
              <ToolBtn $w={39}>
                <ToolBtn $w={36} $on><Lines rows={[[1, 3, 21], [7, 8, 21], [1, 13, 21], [7, 18, 21]]} /></ToolBtn>
              </ToolBtn>
              <ToolBtn $w={37}><Merge /></ToolBtn>
              <ToolBtn $w={34}><Caret /></ToolBtn>
            </ToolRow>
            <ToolRow>
              <ToolBtn $w={39}><Indent dir="out" /></ToolBtn>
              <ToolBtn $w={35}><Indent dir="in" /></ToolBtn>
              <VSep $w={1} />
              <ToolBtn $w={44}><Orientation /></ToolBtn>
              <ToolBtn $w={14}><Caret /></ToolBtn>
            </ToolRow>
          </GroupBody>
          <GroupFoot><GroupName>Alignement</GroupName><Launcher><Launch /></Launcher></GroupFoot>
        </Group>

        <Group $w={160}>
          <GroupBody $pad={14}>
            <ToolRow $h={37}><SelectBox $w={135}>Nombre<Caret /></SelectBox></ToolRow>
            <ToolRow>
              <ToolBtn $w={36}><Accounting /></ToolBtn>
              <ToolBtn $w={18}><Caret /></ToolBtn>
              <ToolBtn $w={48}><Glyph $size={29} $kind="thin">%</Glyph></ToolBtn>
              <ToolBtn $w={30}><Glyph $size={15}>000</Glyph></ToolBtn>
            </ToolRow>
            <ToolRow>
              <ToolBtn $w={32}><Decimals /></ToolBtn>
              <ToolBtn $w={46}><Decimals more /></ToolBtn>
            </ToolRow>
          </GroupBody>
          <GroupFoot><GroupName>Nombre</GroupName><Launcher><Launch /></Launcher></GroupFoot>
        </Group>

        <Group $w={325}>
          <GroupBody>
            <StyleRow><CondFormat />Mise en forme conditionnelle<Caret size={12} /></StyleRow>
            <StyleRow><TableBrush />Mettre sous forme de tableau<Caret size={12} /></StyleRow>
            <StyleRow><TableBrush filled />Styles de cellules<Caret size={12} /></StyleRow>
          </GroupBody>
          <GroupFoot><GroupName>Styles</GroupName></GroupFoot>
        </Group>

        <Group $w={192}>
          <GroupBody $pad={13}>
            <CellRow $w={128}><InsertCells />Insérer<PushRight $r={3}><Caret /></PushRight></CellRow>
            <CellRow $w={158}><DeleteCells />Supprimer<PushRight $r={3}><Caret /></PushRight></CellRow>
            <CellRow $w={122} $on><FormatCells />Format<Caret size={12} /></CellRow>
          </GroupBody>
          <GroupFoot />
        </Group>

        <Group $w={80}>
          <GroupBody>
            <EditCol>
              <Magnifier size={46} stroke="#444" />
              <EditLabel>Édition</EditLabel>
              <Caret />
            </EditCol>
          </GroupBody>
        </Group>

        <Group $w={150}>
          <GroupBody>
            <SecureCol>
              <SecureIcon><Sensitivity /></SecureIcon>
              <span>Niveau de</span>
              <span>confidentialité</span>
            </SecureCol>
          </GroupBody>
          <SecureFoot><GroupName>Confidentialité</GroupName></SecureFoot>
        </Group>
      </Ribbon>

      <FormulaRow>
        <BarBox $w={151}>
          <NameText>K29</NameText>
          <Carets size={17} strokeWidth={2} style={{ marginRight: 6 }} />
        </BarBox>
        <DotsSlot $w={30}><i /><i /><i /></DotsSlot>
        <BarBox $w={127}>
          <FxSlot $w={38}><X size={24} strokeWidth={1.5} /></FxSlot>
          <FxSlot $w={36}><Check size={24} strokeWidth={1.5} /></FxSlot>
          <FxSlot $w={38}><FxText>fx</FxText></FxSlot>
          <Carets size={15} strokeWidth={2} color="#aaa" />
        </BarBox>
        <DotsSlot $w={8} />
        <BarBox><FormulaValue>f</FormulaValue></BarBox>
      </FormulaRow>

      <SheetArea>
        <SheetGrid>
          <Corner />
          {LETTERS.map(l => <ColHead key={l} $active={l === 'K'}>{l}</ColHead>)}

          <RowHead>1</RowHead>
          <Blank $from={2} />

          <RowHead>2</RowHead>
          <TitleCell>
            <SheetTitle>Twelve-month profit and loss projection</SheetTitle>
            <CompanyName>ACME Inc.</CompanyName>
            <CompanyName>J</CompanyName>
          </TitleCell>

          <RowHead>3</RowHead>
          <Blank $from={2} />

          <RowHead>4</RowHead>
          <Blank $from={2} $to={4} />
          {DIAGONALS.map(([t, x, b], i) => (
            <DiagCell key={i}><DiagLabel $x={x} $b={b}>{t}</DiagLabel></DiagCell>
          ))}

          <RowHead>5</RowHead>
          <GutterCell $line />
          <BandLabel>Revenue (Sales)</BandLabel>
          <BandFill />

          {REVENUE.map(([name, values, flags], i) => {
            const tone: Tone = i % 2 === 0 ? 'cream' : 'white';
            return (
              <React.Fragment key={name}>
                <RowHead>{i + 6}</RowHead>
                <GutterCell />
                <Cell $tone={tone} $label>{name}</Cell>
                <Cell $tone={tone} />
                <ValueCells values={values} flags={flags} firstTone={tone} />
              </React.Fragment>
            );
          })}

          <RowHead>13</RowHead>
          <GutterCell />
          <Cell $tone="white" $label $bold>Total Revenue (Sales)</Cell>
          <Cell $tone="white" />
          {REV_TOTAL.map((v, i) => (
            <Cell key={i} $tone="grey" $flag={i === 9} $hash={v === '######'}>{v}</Cell>
          ))}

          <RowHead>14</RowHead>
          <GutterCell />
          <Blank $from={3} $line />

          <RowHead>15</RowHead>
          <GutterCell $line />
          <BandLabel>Cost of Sales</BandLabel>
          <BandFill />

          {COSTS.map(([name, values], i) => {
            const tone: Tone = i % 2 === 0 ? 'cream' : 'white';
            return (
              <React.Fragment key={name}>
                <RowHead>{i + 16}</RowHead>
                <GutterCell />
                <Cell $tone={tone} $label>{name}</Cell>
                <Cell $tone={tone} />
                <ValueCells values={values} flags={i >= 3 ? FLAG_LOWER_COST : FLAG_ALL_COST} firstTone="cream" />
              </React.Fragment>
            );
          })}
        </SheetGrid>
        <FreezeLine />
      </SheetArea>

      <SheetTabs>
        <TabNav>
          <ChevronLeft size={24} strokeWidth={1.5} />
          <ChevronRight size={24} strokeWidth={1.5} />
        </TabNav>
        <ActiveSheet><SheetName>PnL projection</SheetName></ActiveSheet>
        <AddSheet><Plus size={24} strokeWidth={1.5} /></AddSheet>
        <TabDots $w={20}><i /><i /><i /></TabDots>
        <ScrollTrack><ScrollArrow /><ScrollThumb /></ScrollTrack>
      </SheetTabs>

      <StatusBar>
        <StatusItem>Prêt</StatusItem>
        <StatusItem $gap={29}><AccessIco />Accessibilité : vérification terminée</StatusItem>
        <StatusRight><DisplayIco />Paramètres d'affichage</StatusRight>
      </StatusBar>

      <Menu>
        <MenuHeading>Taille de la cellule</MenuHeading>
        <MenuRow><MenuIcon><RowHeightIco /></MenuIcon><span>Hauteu<u>r</u> de ligne...</span></MenuRow>
        <MenuRow><MenuIcon /><span>A<u>j</u>uster la hauteur de ligne</span></MenuRow>
        <MenuSep $h={3} $inset />
        <MenuRow><MenuIcon><ColWidthIco /></MenuIcon><span>Lar<u>g</u>eur de colonne...</span></MenuRow>
        <MenuRow><MenuIcon /><span><u>A</u>juster la largeur des colonnes</span></MenuRow>
        <MenuRow><MenuIcon /><span>Largeur par <u>d</u>éfaut...</span></MenuRow>
        <MenuSep $h={1} />
        <MenuHeading>Visibilité</MenuHeading>
        <MenuRow><MenuIcon /><span><u>M</u>asquer &amp; afficher</span><MenuArrow><ChevronRight size={20} strokeWidth={1.6} /></MenuArrow></MenuRow>
        <MenuSep $h={2} />
        <MenuHeading>Organiser les feuilles</MenuHeading>
        <MenuRow><MenuIcon><RenameIco /></MenuIcon><span>Re<u>n</u>ommer la feuille</span></MenuRow>
        <MenuRow><MenuIcon /><span>Dé<u>p</u>lacer ou copier une feuille...</span></MenuRow>
        <MenuRow><MenuIcon /><span><u>C</u>ouleur d'onglet</span><MenuArrow><ChevronRight size={20} strokeWidth={1.6} /></MenuArrow></MenuRow>
        <MenuSep $h={2} />
        <MenuHeading>Protection</MenuHeading>
        <MenuRow><MenuIcon><ProtectIco /></MenuIcon><span>Protéger la <u>f</u>euille...</span></MenuRow>
        <MenuRow><MenuIcon><LockBox /></MenuIcon><span><u>V</u>errouiller la cellule</span></MenuRow>
        <MenuSep $h={3} $inset />
        <MenuRow><MenuIcon><FormatDialog /></MenuIcon><span>Format de c<u>e</u>llule...</span></MenuRow>
      </Menu>

      <DashedEllipse x={68} y={48} w={103} h={61} />
      <DashedEllipse x={1091} y={168} w={168} h={62} />
      <DashedEllipse x={1112} y={898} w={225} h={48} />

      <Badge $x={27} $y={103} $w={70} $h={70}>1</Badge>
      <Badge $x={1022} $y={215} $w={78} $h={65}>2</Badge>
      <Badge $x={1060} $y={950} $w={84} $h={70}>3</Badge>
    </Page>
  );
}
